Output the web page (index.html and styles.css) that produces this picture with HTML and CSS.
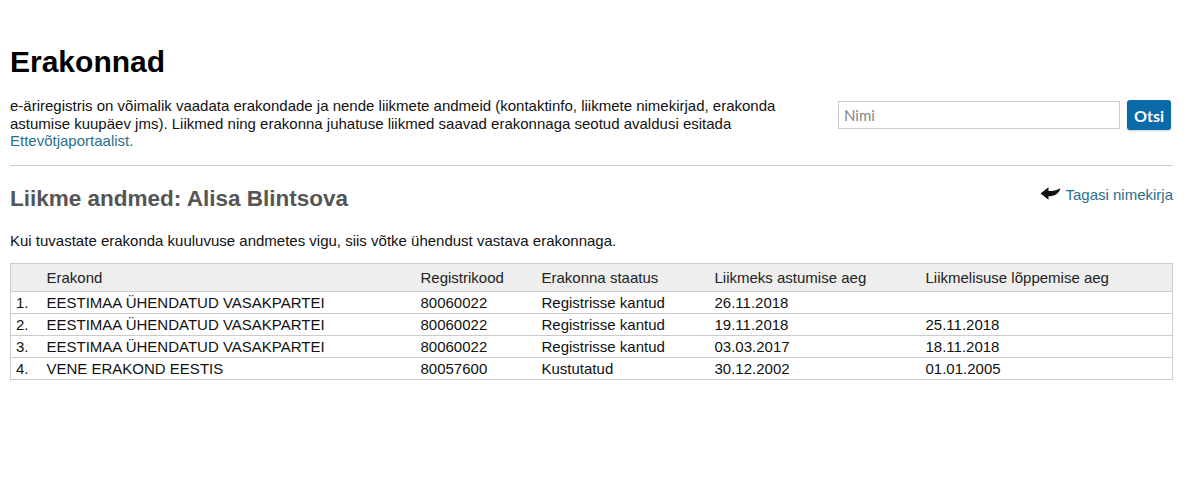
FILE: index.html
```html
<!DOCTYPE html>
<html lang="et">
<head>
<meta charset="utf-8">
<title>Erakonnad</title>
<link rel="stylesheet" href="styles.css">
</head>
<body>
<div class="page">
  <h1 class="title">Erakonnad</h1>
  <div class="intro">
    <p class="intro-text">e-äriregistris on võimalik vaadata erakondade ja nende liikmete andmeid (kontaktinfo, liikmete nimekirjad, erakonda astumise kuupäev jms). Liikmed ning erakonna juhatuse liikmed saavad erakonnaga seotud avaldusi esitada <a class="link" href="#">Ettevõtjaportaalist.</a></p>
    <form class="search">
      <input class="search-input" type="text" placeholder="Nimi">
      <button class="search-btn" type="button">Otsi</button>
    </form>
  </div>
  <hr class="divider">
  <div class="subhead">
    <h2 class="subtitle">Liikme andmed: Alisa Blintsova</h2>
    <a class="back link" href="#"><svg class="back-icon" viewBox="0 0 20 13" width="21" height="13"><path d="M0 6.5 L8 0.3 L8 4 C12.5 4 16.5 3.2 20 1.2 C18.5 7 13.5 9.2 8 9.2 L8 12.8 Z" fill="#111"/></svg>Tagasi nimekirja</a>
  </div>
  <p class="note">Kui tuvastate erakonda kuuluvuse andmetes vigu, siis võtke ühendust vastava erakonnaga.</p>
  <table class="grid">
    <colgroup>
      <col class="c-nr"><col class="c-name"><col class="c-code"><col class="c-status"><col class="c-start"><col class="c-end">
    </colgroup>
    <thead>
      <tr><th></th><th>Erakond</th><th>Registrikood</th><th>Erakonna staatus</th><th>Liikmeks astumise aeg</th><th>Liikmelisuse lõppemise aeg</th></tr>
    </thead>
    <tbody>
      <tr><td>1.</td><td>EESTIMAA ÜHENDATUD VASAKPARTEI</td><td>80060022</td><td>Registrisse kantud</td><td>26.11.2018</td><td></td></tr>
      <tr><td>2.</td><td>EESTIMAA ÜHENDATUD VASAKPARTEI</td><td>80060022</td><td>Registrisse kantud</td><td>19.11.2018</td><td>25.11.2018</td></tr>
      <tr><td>3.</td><td>EESTIMAA ÜHENDATUD VASAKPARTEI</td><td>80060022</td><td>Registrisse kantud</td><td>03.03.2017</td><td>18.11.2018</td></tr>
      <tr><td>4.</td><td>VENE ERAKOND EESTIS</td><td>80057600</td><td>Kustutatud</td><td>30.12.2002</td><td>01.01.2005</td></tr>
    </tbody>
  </table>
</div>
</body>
</html>
```
FILE: styles.css
```css
* { box-sizing: border-box; }
html, body { margin: 0; padding: 0; background: #fff; }
body {
  font-family: "Liberation Sans", Arial, sans-serif;
  font-size: 15px;
  color: #111;
}
.page {
  margin: 0 15px 0 10px;
  padding-top: 45px;
}
.title {
  margin: 0;
  font-size: 30px;
  font-weight: bold;
  line-height: 34px;
  color: #000;
}
.intro {
  display: flex;
  justify-content: space-between;
  align-items: flex-start;
  margin-top: 18px;
}
.intro-text {
  margin: 0;
  width: 790px;
  line-height: 17.5px;
}
.link { color: #2a6f8a; text-decoration: none; }
.search {
  display: flex;
  align-items: center;
  gap: 7px;
  margin: 3px 2px 0 0;
}
.search-input {
  width: 282px;
  height: 28px;
  border: 1px solid #ccc;
  padding: 0 5px;
  font-family: Lato, "Open Sans", sans-serif;
  font-size: 15px;
  color: #333;
  outline: none;
}
.search-input::placeholder { color: #888; }
.search-btn {
  height: 30px;
  width: 44px;
  padding: 0;
  border: none;
  border-radius: 3px;
  background: #0b6aaa;
  color: #fff;
  font-family: Lato, "Open Sans", sans-serif;
  font-weight: bold;
  font-size: 16px;
  box-shadow: 0 1px 2px rgba(0,0,0,0.2);
}
.divider {
  margin: 15px 0 0 0;
  border: none;
  border-top: 1px solid #ccc;
}
.subhead {
  display: flex;
  justify-content: space-between;
  align-items: flex-start;
  margin-top: 20px;
}
.subtitle {
  margin: 0;
  font-size: 22.5px;
  line-height: 26px;
  color: #555;
}
.back {
  display: flex;
  align-items: center;
  gap: 4px;
  font-size: 15px;
  line-height: 18px;
}
.back-icon { display: block; margin-top: -3px; }
.note {
  margin: 20px 0 0 0;
  line-height: 17px;
}
.grid {
  margin-top: 14px;
  width: 100%;
  border-collapse: collapse;
  border: 1px solid #ccc;
  table-layout: fixed;
}
.c-nr { width: 31px; }
.c-name { width: 374px; }
.c-code { width: 121px; }
.c-status { width: 173px; }
.c-start { width: 211px; }
.grid th {
  background: #eee;
  font-weight: normal;
  text-align: left;
  padding: 5px 5px;
  line-height: 17px;
  color: #222;
}
.grid td {
  padding: 2px 5px;
  line-height: 17px;
  border-top: 1px solid #ccc;
  color: #111;
}
```
